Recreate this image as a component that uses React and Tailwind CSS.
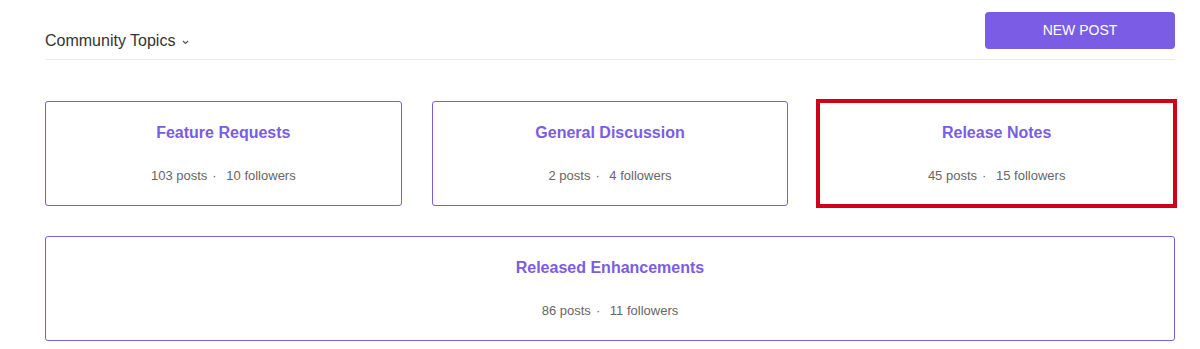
const topics = [
  { name: 'Feature Requests', posts: 103, followers: 10 },
  { name: 'General Discussion', posts: 2, followers: 4 },
  { name: 'Release Notes', posts: 45, followers: 15, highlighted: true },
];

function TopicCard({ topic }) {
  return (
    <div
      className={
        'h-[105px] border border-[#7b5ce5] bg-white flex flex-col items-center ' +
        (topic.highlighted ? 'rounded-none outline-4 outline-[#d0021b] -outline-offset-2' : 'rounded-[3px]')
      }
    >
      <div className="mt-[20px] text-[16px] leading-[22px] font-bold text-[#7b5ce5]">{topic.name}</div>
      <div className="mt-[23px] text-[13px] leading-[18px] text-[#666666]">
        {topic.posts} posts
        <span className="ml-[5px] mr-[6px]">·</span>
        {' '}{topic.followers} followers
      </div>
    </div>
  );
}

export default function App() {
  return (
    <div className="min-h-[349px] bg-white pl-[45px] pr-[25px] pt-[12px] font-['Liberation_Sans',Arial,sans-serif]">
      {/* Header */}
      <div className="flex items-center justify-between h-[48px] border-b border-[#ebebeb]">
        <div className="flex items-center pt-[10px] text-[16px] text-[#333333]">
          Community Topics
          <svg className="ml-[7px] mt-[4px]" width="7" height="5" viewBox="0 0 7 5" fill="none">
            <path d="M1 1l2.5 2.5L6 1" stroke="#555" strokeWidth="1.2" />
          </svg>
        </div>
        <button className="self-start w-[190px] h-[37px] rounded-[4px] bg-[#7b5ce5] text-white text-[14px]">
          NEW POST
        </button>
      </div>

      {/* Topics grid */}
      <div className="mt-[41px] grid grid-cols-3 gap-x-[30px] gap-y-[30px]">
        {topics.map((t) => (
          <TopicCard key={t.name} topic={t} />
        ))}
        <div className="col-span-3">
          <TopicCard topic={{ name: 'Released Enhancements', posts: 86, followers: 11 }} />
        </div>
      </div>
    </div>
  );
}
